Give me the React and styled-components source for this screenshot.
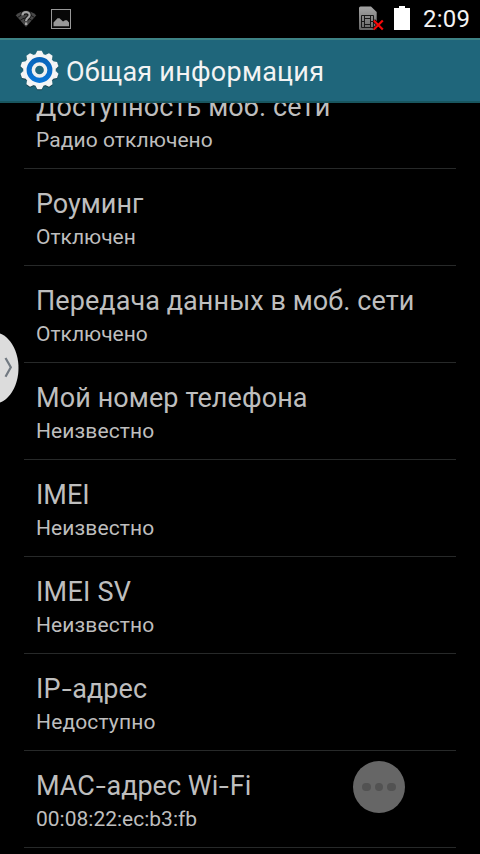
import React from 'react'
import styled, { createGlobalStyle } from 'styled-components'

const GlobalStyle = createGlobalStyle`
    * {
        box-sizing: border-box;
    }
    body {
        margin: 0;
        background: #000;
        font-family: Roboto, sans-serif;
        overflow: hidden;
    }
`

const Screen = styled.div`
    position: relative;
    display: flex;
    flex-direction: column;
    width: 480px;
    height: 854px;
    overflow: hidden;
    background: #000;
`

const StatusBar = styled.div`
    flex: none;
    display: flex;
    justify-content: space-between;
    height: 38px;
    padding: 0 9px 0 15px;
`

const StatusGroup = styled.div`
    display: flex;
    align-items: flex-start;
    gap: ${(props) => props.$gap}px;

    svg {
        display: block;
    }
`

const Clock = styled.span`
    width: 48px;
    margin-left: 3px;
    font-size: 24px;
    line-height: 39px;
    letter-spacing: 0.2px;
    white-space: nowrap;
    color: #f4f4f4;
`

const ActionBar = styled.header`
    flex: none;
    display: flex;
    align-items: center;
    gap: 6px;
    height: 65px;
    padding-left: 20px;
    background: #1f667b;
    border-top: 2px solid #3d8285;
    border-bottom: 2px solid #19565f;
`

const Heading = styled.h1`
    margin: 2px 0 0;
    font-size: 27px;
    font-weight: 400;
    line-height: 34px;
    letter-spacing: 0.25px;
    color: #f3f3f3;
`

const ListViewport = styled.main`
    flex: 1;
    min-height: 0;
    overflow: hidden;
`

const List = styled.ul`
    margin: -31px 24px 0;
    padding: 0;
    list-style: none;
`

const Row = styled.li`
    height: 97px;
    padding: 18px 12px 0;
    border-bottom: 1px solid #272929;
    white-space: nowrap;
`

const RowTitle = styled.div`
    font-size: 27px;
    line-height: 34px;
    letter-spacing: ${(props) => props.$spacing || 0}px;
    color: #bebebe;
`

const WideHyphen = styled.span`
    display: inline-block;
    width: 11.6px;
    text-align: center;
    transform: scaleX(1.35);
`

const RowSummary = styled.div`
    margin-top: 1px;
    font-size: 21px;
    line-height: 30px;
    letter-spacing: ${(props) => props.$spacing || 0}px;
    color: #bebebe;
`

const EdgeHandle = styled.div`
    position: absolute;
    left: 0;
    top: 332px;
    width: 19px;
    height: 72px;

    svg {
        display: block;
    }
`

const FloatingButton = styled.div`
    position: absolute;
    left: 353px;
    top: 761px;
    display: flex;
    align-items: center;
    justify-content: center;
    gap: 4px;
    width: 52px;
    height: 52px;
    border-radius: 50%;
    background: #666;
`

const Dot = styled.span`
    width: 8.5px;
    height: 8.5px;
    border-radius: 50%;
    background: #525252;
`

function WifiUnknownIcon() {
    return (
        <svg width="22" height="38" viewBox="15 0 22 38" fill="none">
            <path d="M15.7 15.2Q26 6.8 36.3 15.2L26 27Z" fill="#484848" />
            <path d="M17.5 17.5Q26 10.5 34.5 17.5M20 20.5Q26 15.5 32 20.5" stroke="#161616" strokeWidth="1" />
            <path
                d="M22.4 15.4C22.4 11 29.8 11 29.6 15.2C29.5 17.8 26.1 17.6 26.1 21"
                stroke="#111"
                strokeWidth="4"
            />
            <path
                d="M22.4 15.4C22.4 11 29.8 11 29.6 15.2C29.5 17.8 26.1 17.6 26.1 21"
                stroke="#a4a4a4"
                strokeWidth="2.2"
            />
            <rect x="25" y="22.5" width="2.3" height="2.5" fill="#a4a4a4" />
        </svg>
    )
}

function PictureIcon() {
    return (
        <svg width="20" height="38" viewBox="51 0 20 38">
            <rect x="51.5" y="9.5" width="19" height="19" fill="#080808" stroke="#989898" />
            <path d="M53.5 26.2V22.5L57.5 18.2H59.5L63 21.5L65 20.2H67L69 22.5V26.2Z" fill="#989898" />
        </svg>
    )
}

function NoSimIcon() {
    return (
        <svg width="26" height="38" viewBox="358 0 26 38" fill="none">
            <defs>
                <linearGradient id="sim" x1="0" y1="0" x2="0" y2="1">
                    <stop offset="0" stopColor="#a5a5a5" />
                    <stop offset="1" stopColor="#666" />
                </linearGradient>
            </defs>
            <path
                d="M360.5 6.5H371L376.7 12V28.5Q376.7 30 375 30H360.5Q359 30 359 28.5V8Q359 6.5 360.5 6.5Z"
                fill="url(#sim)"
            />
            <path d="M361.5 15.5H373.5V27.5H361.5Z" stroke="#191919" />
            <path
                d="M364.5 15.5V27.5M370.5 15.5V27.5M364.5 18.5H370.5M364.5 24.5H370.5M361.5 21.5H364.5M370.5 21.5H373.5"
                stroke="#191919"
            />
            <path d="M373.8 20.5L382.8 29.5M382.8 20.5L373.8 29.5" stroke="#000" strokeWidth="3.4" />
            <path d="M373.8 20.5L382.8 29.5M382.8 20.5L373.8 29.5" stroke="#f60909" strokeWidth="2.2" />
        </svg>
    )
}

function BatteryIcon() {
    return (
        <svg width="16" height="38" viewBox="0 0 16 38">
            <path d="M5 6H11V8H16V30H0V8H5Z" fill="#fff" />
        </svg>
    )
}

const TEETH = Array.from({ length: 10 }, (_, i) => i * 36)

function GearShape(props) {
    return (
        <g {...props}>
            <circle r="16.3" />
            {TEETH.map((angle) => (
                <path key={angle} d="M-4.2 -15.5L-2.2 -19.2H2.2L4.2 -15.5Z" transform={`rotate(${angle})`} />
            ))}
        </g>
    )
}

function GearIcon() {
    return (
        <svg width="40" height="42" viewBox="-19.5 -20 40 42">
            <defs>
                <linearGradient id="ring" x1="0" y1="0" x2="0" y2="1">
                    <stop offset="0" stopColor="#0963b8" />
                    <stop offset="1" stopColor="#0a76d8" />
                </linearGradient>
            </defs>
            <GearShape fill="#16404c" transform="translate(0 1)" />
            <GearShape fill="#f5f5f5" />
            <circle r="12.9" fill="url(#ring)" />
            <circle r="6.1" fill="#1f667b" stroke="#f0f0f0" strokeWidth="3.5" />
        </svg>
    )
}

const rows = [
    { title: 'Доступность моб. сети', summary: 'Радио отключено', titleSpacing: 0.12, summarySpacing: 0.08 },
    { title: 'Роуминг', summary: 'Отключен' },
    { title: 'Передача данных в моб. сети', summary: 'Отключено', titleSpacing: 0.07 },
    { title: 'Мой номер телефона', summary: 'Неизвестно', titleSpacing: 0.1, summarySpacing: 0.1 },
    { title: 'IMEI', summary: 'Неизвестно', summarySpacing: 0.1 },
    { title: 'IMEI SV', summary: 'Неизвестно', titleSpacing: 0.25, summarySpacing: 0.1 },
    { title: 'IP-адрес', summary: 'Недоступно', titleSpacing: 0.1, summarySpacing: 0.15 },
    { title: 'MAC-адрес Wi-Fi', summary: '00:08:22:ec:b3:fb' },
]

// Titles use a wider hyphen than the one in the font
function renderTitle(title) {
    return title.split('-').map((part, i) => (
        <React.Fragment key={i}>
            {i > 0 && <WideHyphen>-</WideHyphen>}
            {part}
        </React.Fragment>
    ))
}

export default function App() {
    return (
        <>
            <GlobalStyle />
            <Screen>
                <StatusBar>
                    <StatusGroup $gap={14}>
                        <WifiUnknownIcon />
                        <PictureIcon />
                    </StatusGroup>
                    <StatusGroup $gap={10}>
                        <NoSimIcon />
                        <BatteryIcon />
                        <Clock>2:09</Clock>
                    </StatusGroup>
                </StatusBar>
                <ActionBar>
                    <GearIcon />
                    <Heading>Общая информация</Heading>
                </ActionBar>
                <ListViewport>
                    <List>
                        {rows.map((row) => (
                            <Row key={row.title}>
                                <RowTitle $spacing={row.titleSpacing}>{renderTitle(row.title)}</RowTitle>
                                <RowSummary $spacing={row.summarySpacing}>{row.summary}</RowSummary>
                            </Row>
                        ))}
                    </List>
                </ListViewport>
                <EdgeHandle>
                    <svg width="19" height="72" viewBox="0 0 19 72" fill="none">
                        <path d="M0 1.5C10 5 18.5 19 18.5 36S10 67 0 70.5Z" fill="#dcdcdc" />
                        <path d="M5.5 26L10.8 35.3L5.5 44.8" stroke="#717981" strokeWidth="2.2" />
                    </svg>
                </EdgeHandle>
                <FloatingButton>
                    <Dot />
                    <Dot />
                    <Dot />
                </FloatingButton>
            </Screen>
        </>
    )
}
